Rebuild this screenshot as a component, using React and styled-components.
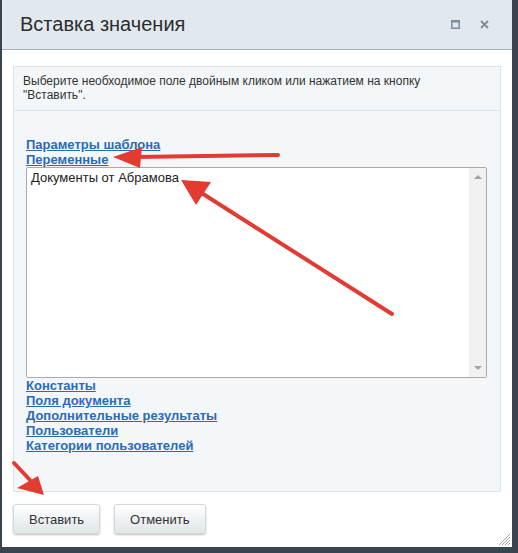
import styled, { createGlobalStyle } from 'styled-components';

const GlobalStyle = createGlobalStyle`
    body {
        margin: 0;
        background: #3a4550;
        font-family: "Liberation Sans", Arial, sans-serif;
    }
`

const Page = styled.div`
    position: relative;
    width: 518px;
    height: 553px;
    overflow: hidden;
`

const Dialog = styled.div`
    margin-left: 2px;
    width: 510px;
    height: 547px;
    background: #fff;
    display: flex;
    flex-direction: column;
    position: relative;
`

const Header = styled.div`
    height: 49px;
    flex: none;
    background: #e2e9ee;
    border-bottom: 1px solid #a8b1b8;
    display: flex;
    align-items: center;
    padding: 0 23px 0 18px;
`

const Title = styled.div`
    flex: 1;
    font-size: 20px;
    color: #2d2d2d;
    margin-top: -1px;
`

const HeadIcons = styled.div`
    display: flex;
    align-items: center;
    gap: 20px;
    color: #7d8c99;
`

const Body = styled.div`
    flex: 1;
    display: flex;
    flex-direction: column;
    padding: 16px 11px 0 11px;
`

const Panel = styled.div`
    border: 1px solid #dbe4e9;
    background: #f4f7f9;
    height: 426px;
    box-sizing: border-box;
`

const Hint = styled.div`
    font-size: 12px;
    line-height: 14px;
    color: #333;
    padding: 7px 9px 8px 9px;
    border-bottom: 1px solid #dbe4e9;
`

const Groups = styled.div`
    padding: 26px 12px 0 12px;
    display: flex;
    flex-direction: column;
    align-items: flex-start;
`

const GroupLink = styled.a`
    font-size: 13px;
    font-weight: bold;
    line-height: 15px;
    color: #2a6bb6;
    text-decoration: underline;
    cursor: pointer;
`

const ListBox = styled.div`
    align-self: stretch;
    height: 211px;
    box-sizing: border-box;
    border: 1px solid #a9a9a9;
    border-radius: 2px;
    background: #fff;
    display: flex;
    margin-right: 1px;
`

const Options = styled.div`
    flex: 1;
    padding: 2px 4px;
    font-size: 13px;
    line-height: 16px;
    color: #222;
`

const ScrollBar = styled.div`
    width: 17px;
    background: #f1f1f1;
    display: flex;
    flex-direction: column;
    justify-content: space-between;
    align-items: center;
    padding: 7px 0;
`

const ScrollArrow = styled.div`
    width: 0;
    height: 0;
    border-left: 4px solid transparent;
    border-right: 4px solid transparent;
    ${p => p.$down ? 'border-top: 4px solid #a3a3a3;' : 'border-bottom: 4px solid #a3a3a3;'}
`

const Footer = styled.div`
    display: flex;
    gap: 14px;
    padding-top: 12px;
`

const Button = styled.button`
    height: 30px;
    padding: 0 15px;
    font-family: "Liberation Sans", Arial, sans-serif;
    font-size: 13px;
    color: #333;
    border: 1px solid #d2d8dc;
    border-radius: 3px;
    background: linear-gradient(#ffffff, #dfe5e8);
    box-shadow: 0 1px 2px rgba(0, 0, 0, 0.25);
`

const Grip = styled.svg`
    position: absolute;
    right: 2px;
    bottom: 2px;
`

const Overlay = styled.svg`
    position: absolute;
    left: 0;
    top: 0;
    pointer-events: none;
`

const links1 = ['Параметры шаблона', 'Переменные'];
const links2 = ['Константы', 'Поля документа', 'Дополнительные результаты', 'Пользователи', 'Категории пользователей'];

export default function App() {
    return (
        <Page>
            <GlobalStyle />
            <Dialog>
                <Header>
                    <Title>Вставка значения</Title>
                    <HeadIcons>
                        <svg width="9" height="9" viewBox="0 0 9 9">
                            <rect x="0.75" y="0.75" width="7.5" height="7.5" fill="none" stroke="currentColor" strokeWidth="1.5" />
                            <rect x="0" y="0" width="9" height="2.5" fill="currentColor" />
                        </svg>
                        <svg width="9" height="9" viewBox="0 0 9 9">
                            <path d="M1 1 L8 8 M8 1 L1 8" stroke="currentColor" strokeWidth="1.8" />
                        </svg>
                    </HeadIcons>
                </Header>
                <Body>
                    <Panel>
                        <Hint>
                            Выберите необходимое поле двойным кликом или нажатием на кнопку<br />
                            "Вставить".
                        </Hint>
                        <Groups>
                            {links1.map(l => <GroupLink key={l}>{l}</GroupLink>)}
                            <ListBox>
                                <Options>Документы от Абрамова</Options>
                                <ScrollBar>
                                    <ScrollArrow />
                                    <ScrollArrow $down />
                                </ScrollBar>
                            </ListBox>
                            {links2.map(l => <GroupLink key={l}>{l}</GroupLink>)}
                        </Groups>
                    </Panel>
                    <Footer>
                        <Button>Вставить</Button>
                        <Button>Отменить</Button>
                    </Footer>
                </Body>
                <Grip width="11" height="11" viewBox="0 0 11 11">
                    {[0, 3, 6, 9].map(o => (
                        <line key={o} x1={o} y1="11" x2="11" y2={o} stroke="#a0a0a0" strokeWidth="1" />
                    ))}
                </Grip>
            </Dialog>
            <Overlay width="518" height="553">
                <g fill="#e23b31" stroke="#e23b31" strokeLinecap="round">
                    <line x1="278" y1="155" x2="135" y2="157" strokeWidth="4" />
                    <polygon points="113,157 142,147 140,168" stroke="none" />
                    <line x1="392" y1="314" x2="200" y2="192" strokeWidth="4" />
                    <polygon points="181,180 211,182 196,205" stroke="none" />
                    <line x1="14" y1="463" x2="30" y2="480" strokeWidth="4" />
                    <polygon points="44,495 38,476 17,488" stroke="none" />
                </g>
            </Overlay>
        </Page>
    );
}
